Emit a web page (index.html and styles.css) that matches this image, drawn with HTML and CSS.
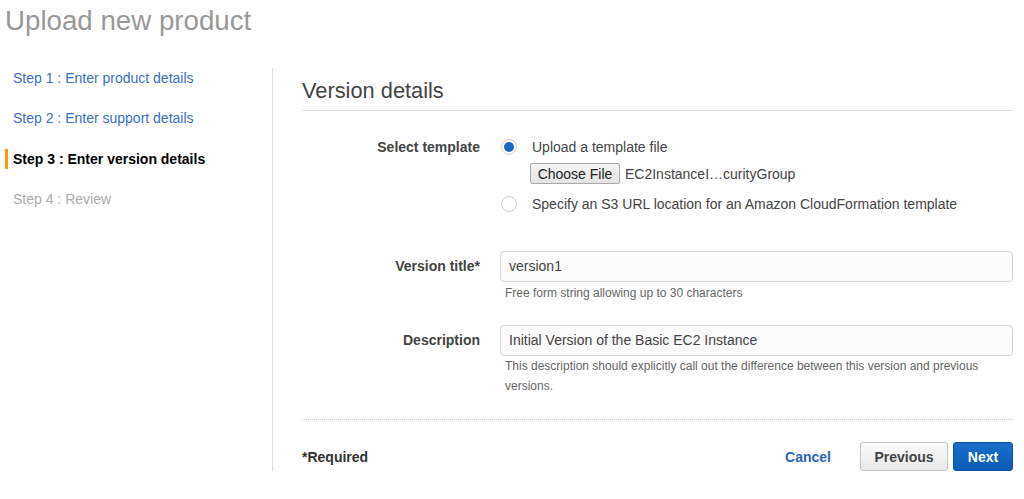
FILE: index.html
```html
<!DOCTYPE html>
<html>
<head>
<meta charset="utf-8">
<link rel="stylesheet" href="styles.css">
</head>
<body>
<h1 class="page-title">Upload new product</h1>
<div class="layout">
  <nav class="steps">
    <a class="step link">Step 1 : Enter product details</a>
    <a class="step link">Step 2 : Enter support details</a>
    <span class="step current">Step 3 : Enter version details</span>
    <span class="step disabled">Step 4 : Review</span>
  </nav>
  <main class="content">
    <h2 class="section-title">Version details</h2>
    <div class="form-row template-row">
      <div class="label">Select template</div>
      <div class="control">
        <div class="radio-line"><span class="radio on"></span><span>Upload a template file</span></div>
        <div class="file-line"><span class="file-btn">Choose File</span><span class="file-name">EC2InstanceI…curityGroup</span></div>
        <div class="radio-line second"><span class="radio"></span><span>Specify an S3 URL location for an Amazon CloudFormation template</span></div>
      </div>
    </div>
    <div class="form-row title-row">
      <div class="label field-label">Version title*</div>
      <div class="control">
        <div class="input">version1</div>
        <div class="help">Free form string allowing up to 30 characters</div>
      </div>
    </div>
    <div class="form-row desc-row">
      <div class="label field-label">Description</div>
      <div class="control">
        <div class="input">Initial Version of the Basic EC2 Instance</div>
        <div class="help">This description should explicitly call out the difference between this version and previous versions.</div>
      </div>
    </div>
    <div class="footer">
      <span class="required">*Required</span>
      <div class="actions">
        <a class="cancel">Cancel</a>
        <span class="btn btn-prev">Previous</span>
        <span class="btn btn-next">Next</span>
      </div>
    </div>
  </main>
</div>
</body>
</html>
```
FILE: styles.css
```css
html, body {
  margin: 0;
  padding: 0;
  background: #fff;
  font-family: "Liberation Sans", Arial, sans-serif;
  color: #444;
}
.page-title {
  margin: 5px 0 0 0;
  padding-left: 5px;
  font-size: 27.7px;
  line-height: 32px;
  font-weight: normal;
  color: #999;
}
.layout {
  display: flex;
  align-items: flex-start;
  margin-top: 21px;
}
.steps {
  width: 272px;
  display: flex;
  flex-direction: column;
  flex-shrink: 0;
}
.step {
  display: block;
  padding: 10px 0 10px 13px;
  line-height: 20.3px;
  font-size: 14px;
  position: relative;
}
.step.link { color: #3a70c5; }
.step.current { color: #000; font-weight: bold; }
.step.current::before {
  content: "";
  position: absolute;
  left: 5px;
  top: 10px;
  width: 3px;
  height: 20px;
  background: #f89c0e;
}
.step.disabled { color: #aaa; }
.content {
  flex: 1;
  margin-top: 10px;
  border-left: 1px solid #ddd;
  padding: 11px 11px 0 29px;
}
.section-title {
  margin: 0;
  font-size: 21.8px;
  line-height: 24px;
  font-weight: normal;
  color: #444;
  padding-bottom: 7px;
  border-bottom: 1px solid #ddd;
}
.form-row {
  display: grid;
  grid-template-columns: 178px 1fr;
  column-gap: 20px;
}
.label {
  text-align: right;
  font-size: 14px;
  font-weight: bold;
  line-height: 20px;
  color: #444;
}
.field-label { padding-top: 5px; }
.template-row { margin-top: 26px; }
.title-row { margin-top: 37px; }
.desc-row { margin-top: 22px; }
.radio-line {
  display: flex;
  align-items: center;
  height: 20px;
  font-size: 14px;
  color: #444;
}
.radio-line.second { margin-top: 10px; }
.radio {
  width: 16px;
  height: 16px;
  box-sizing: border-box;
  border-radius: 50%;
  border: 1px solid #d0d0d0;
  background: #fff;
  margin: 0 15px 0 1px;
  position: relative;
  flex-shrink: 0;
}
.radio.on::after {
  content: "";
  position: absolute;
  left: 2px;
  top: 2px;
  width: 10px;
  height: 10px;
  border-radius: 50%;
  background: #1a66c2;
}
.file-line {
  display: flex;
  align-items: center;
  margin-top: 6px;
  padding-left: 30px;
  height: 21px;
}
.file-btn {
  display: inline-flex;
  align-items: center;
  justify-content: center;
  width: 90px;
  height: 21px;
  box-sizing: border-box;
  border: 1px solid #a9a9a9;
  border-radius: 2px;
  background: linear-gradient(#f4f4f4, #e4e4e4);
  font-size: 14px;
  color: #222;
}
.file-name {
  margin-left: 5px;
  font-size: 14px;
  color: #444;
}
.input {
  height: 31px;
  box-sizing: border-box;
  border: 1px solid #d5d5d5;
  border-radius: 4px;
  background: #fbfbfb;
  padding: 0 8px;
  font-size: 14px;
  line-height: 29px;
  color: #444;
}
.help {
  font-size: 12px;
  line-height: 20px;
  color: #666;
  padding: 0 0 0 5px;
}
.title-row .help { padding-top: 1px; }
.footer {
  margin-top: 23px;
  border-top: 1px dotted #ccc;
  padding-top: 22px;
  display: flex;
  align-items: center;
  justify-content: space-between;
}
.required {
  font-size: 14px;
  font-weight: bold;
  color: #333;
}
.actions {
  display: flex;
  align-items: center;
}
.cancel {
  font-size: 14px;
  font-weight: bold;
  color: #2a65b9;
  margin-right: 29px;
}
.btn {
  display: inline-flex;
  align-items: center;
  justify-content: center;
  height: 29px;
  box-sizing: border-box;
  border-radius: 3px;
  font-size: 14px;
  font-weight: bold;
}
.btn-prev {
  width: 88px;
  border: 1px solid #c6c6c6;
  background: linear-gradient(#fafafa, #e9e9e9);
  color: #444;
}
.btn-next {
  width: 60px;
  margin-left: 5px;
  border: 1px solid #0c4f9c;
  background: linear-gradient(#1a6fcb, #0a5bb4);
  color: #fff;
}
```
